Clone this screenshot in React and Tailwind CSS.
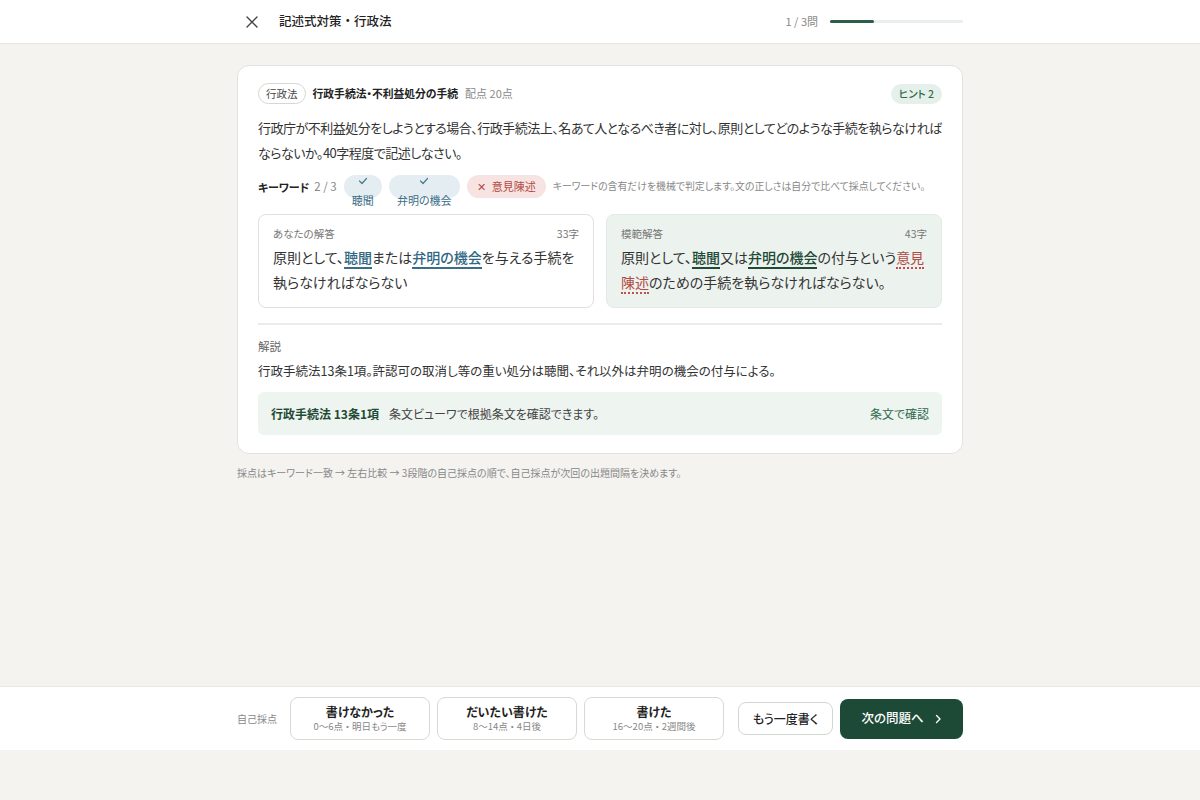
import React from 'react';

const font = { fontFamily: '"Noto Sans CJK JP", "Noto Sans", sans-serif' };

function CloseIcon() {
  return (
    <svg width="14" height="14" viewBox="0 0 14 14" fill="none" stroke="#444" strokeWidth="1.4" strokeLinecap="round">
      <path d="M2 2l10 10M12 2L2 12" />
    </svg>
  );
}

function Check() {
  return (
    <svg className="shrink-0" width="10" height="8" viewBox="0 0 10 8" fill="none" stroke="#4a7a90" strokeWidth="1.2" strokeLinecap="round" strokeLinejoin="round">
      <path d="M1.5 4l2.5 2.5L8.5 1.5" />
    </svg>
  );
}

function KeywordHit({ label, w }) {
  return (
    <span className={`flex h-[23px] shrink-0 flex-col items-center rounded-full bg-[#e4eef2] pt-[2px] ${w}`}>
      <Check />
      <span className="mt-[8px] shrink-0 whitespace-nowrap text-[11px] leading-[14px] text-[#3b6d86]">{label}</span>
    </span>
  );
}

function Mark({ children, color }) {
  return (
    <span className={`border-b-2 font-medium ${color}`}>{children}</span>
  );
}

function GradeButton({ title, sub }) {
  return (
    <button className="flex h-[43px] w-[140px] flex-col items-center justify-center rounded-lg border border-[#d8d8d4] bg-white">
      <span className="text-[12px] font-bold leading-[16px] text-[#222]">{title}</span>
      <span className="whitespace-nowrap text-[9.5px] leading-[13px] text-[#888]">{sub}</span>
    </button>
  );
}

export default function App() {
  return (
    <div style={font} className="flex h-[800px] flex-col bg-[#f4f3f0] text-[#333] [font-feature-settings:'palt']">
      <header className="flex h-[44px] shrink-0 items-center border-b border-[#e6e5e1] bg-white">
        <div className="mx-auto flex w-[726px] items-center">
          <span className="ml-[8px] flex items-center"><CloseIcon /></span>
          <h1 className="ml-[20px] text-[12.5px] font-medium text-[#222] [font-feature-settings:normal]">記述式対策・行政法</h1>
          <div className="ml-auto flex items-center">
            <span className="text-[11px] text-[#888]">1 / 3問</span>
            <div className="ml-[12px] h-[3px] w-[133px] rounded-full bg-[#e8efec]">
              <div className="h-[3px] w-[44px] rounded-full bg-[#2c5e48]" />
            </div>
          </div>
        </div>
      </header>

      <main className="flex-1">
        <div className="mx-auto mt-[21px] w-[726px]">
          <section className="rounded-xl border border-[#e3e2de] bg-white px-[20px] pb-[18px] pt-[17px]">
            <div className="flex items-center">
              <span className="rounded-full border border-[#d6d6d2] px-[7px] py-[2px] text-[10.5px] leading-[15px] text-[#444]">行政法</span>
              <span className="ml-[7px] text-[10.8px] font-bold text-[#222]">行政手続法・不利益処分の手続</span>
              <span className="ml-[7px] text-[11px] text-[#888]">配点 20点</span>
              <span className="ml-auto rounded-full bg-[#e6f0ea] px-[8px] py-[2px] text-[10.5px] leading-[16px] font-medium text-[#2f6a4e]">ヒント 2</span>
            </div>

            <p className="mt-[11px] text-[13px] leading-[25px] tracking-[-0.5px] text-[#333]">
              行政庁が不利益処分をしようとする場合、行政手続法上、名あて人となるべき者に対し、原則としてどのような手続を執らなければならないか。40字程度で記述しなさい。
            </p>

            <div className="mt-[10px] flex h-[23px] items-start whitespace-nowrap">
              <span className="mt-[4px] text-[11px] font-bold text-[#222]">キーワード</span>
              <span className="ml-[5px] mt-[3px] text-[11.5px] text-[#888]">2 / 3</span>
              <span className="ml-[7px] flex gap-[7px]">
                <KeywordHit label="聴聞" w="w-[38px]" />
                <KeywordHit label="弁明の機会" w="w-[71px]" />
                <span className="flex h-[23px] items-center gap-[6px] rounded-full bg-[#f7e4e2] px-[10px] text-[11px] text-[#b24a43]">
                  <span className="text-[11px]">✕</span>意見陳述
                </span>
              </span>
              <span className="ml-[7px] mt-[4px] text-[9.9px] text-[#888]">キーワードの含有だけを機械で判定します。文の正しさは自分で比べて採点してください。</span>
            </div>

            <div className="mt-[16px] grid grid-cols-2 gap-[12px]">
              <div className="rounded-lg border border-[#e0e0dc] bg-white px-[14px] pb-[12px] pt-[11px]">
                <div className="flex justify-between text-[10.5px] text-[#777]">
                  <span>あなたの解答</span>
                  <span>33字</span>
                </div>
                <p className="mt-[3px] text-[14px] leading-[25px] text-[#333]">
                  原則として、<Mark color="border-[#3b6d86] text-[#2f6782]">聴聞</Mark>または<Mark color="border-[#3b6d86] text-[#2f6782]">弁明の機会</Mark>を与える手続を執らなければならない
                </p>
              </div>
              <div className="rounded-lg border border-[#e1ebe4] bg-[#ecf2ee] px-[14px] pb-[12px] pt-[11px]">
                <div className="flex justify-between text-[10.5px] text-[#777]">
                  <span>模範解答</span>
                  <span>43字</span>
                </div>
                <p className="mt-[3px] text-[14px] leading-[25px] text-[#333]">
                  原則として、<Mark color="border-[#1f4a36] text-[#1f4a36]">聴聞</Mark>又は<Mark color="border-[#1f4a36] text-[#1f4a36]">弁明の機会</Mark>の付与という<span className="border-b-2 border-dotted border-[#c0504a] text-[#b24a43]">意見陳述</span>のための手続を執らなければならない。
                </p>
              </div>
            </div>

            <div className="mt-[15px] border-t-2 border-[#ecebe8]" />

            <div className="mt-[13px] text-[11.5px] text-[#666]">解説</div>
            <p className="mt-[5px] text-[12.5px] leading-[22px] text-[#333]">行政手続法13条1項。許認可の取消し等の重い処分は聴聞、それ以外は弁明の機会の付与による。</p>

            <div className="mt-[10px] flex h-[43px] items-center rounded-md bg-[#eef4f0] px-[13px] text-[12px]">
              <span className="font-bold text-[#1f4a36]">行政手続法 13条1項</span>
              <span className="ml-[10px] text-[#444]">条文ビューワで根拠条文を確認できます。</span>
              <span className="ml-auto text-[#2f6a4e]">条文で確認</span>
            </div>
          </section>
          <p className="mt-[11px] text-[10px] text-[#888]">採点はキーワード一致 → 左右比較 → 3段階の自己採点の順で、自己採点が次回の出題間隔を決めます。</p>
        </div>
      </main>

      <footer className="flex h-[64px] shrink-0 items-center border-t border-[#e8e7e3] bg-white">
        <div className="mx-auto flex w-[726px] items-center">
          <span className="mr-[13px] whitespace-nowrap text-[10px] text-[#888]">自己採点</span>
          <div className="flex gap-[7px]">
            <GradeButton title="書けなかった" sub="0〜6点 ・ 明日もう一度" />
            <GradeButton title="だいたい書けた" sub="8〜14点 ・ 4日後" />
            <GradeButton title="書けた" sub="16〜20点 ・ 2週間後" />
          </div>
          <button className="ml-[14px] h-[33px] w-[96px] whitespace-nowrap rounded-lg border border-[#cfd8d3] bg-white text-[12px] font-medium text-[#222]">もう一度書く</button>
          <button className="ml-[7px] flex h-[40px] w-[123px] shrink-0 items-center justify-center gap-[10px] rounded-lg bg-[#1d4a36] text-[12.5px] font-medium text-white">
            次の問題へ
            <svg width="8" height="10" viewBox="0 0 8 10" fill="none" stroke="white" strokeWidth="1.4" strokeLinecap="round" strokeLinejoin="round"><path d="M2.5 1.5L6 5l-3.5 3.5" /></svg>
          </button>
        </div>
      </footer>
      <div className="h-[50px] shrink-0" />
    </div>
  );
}
